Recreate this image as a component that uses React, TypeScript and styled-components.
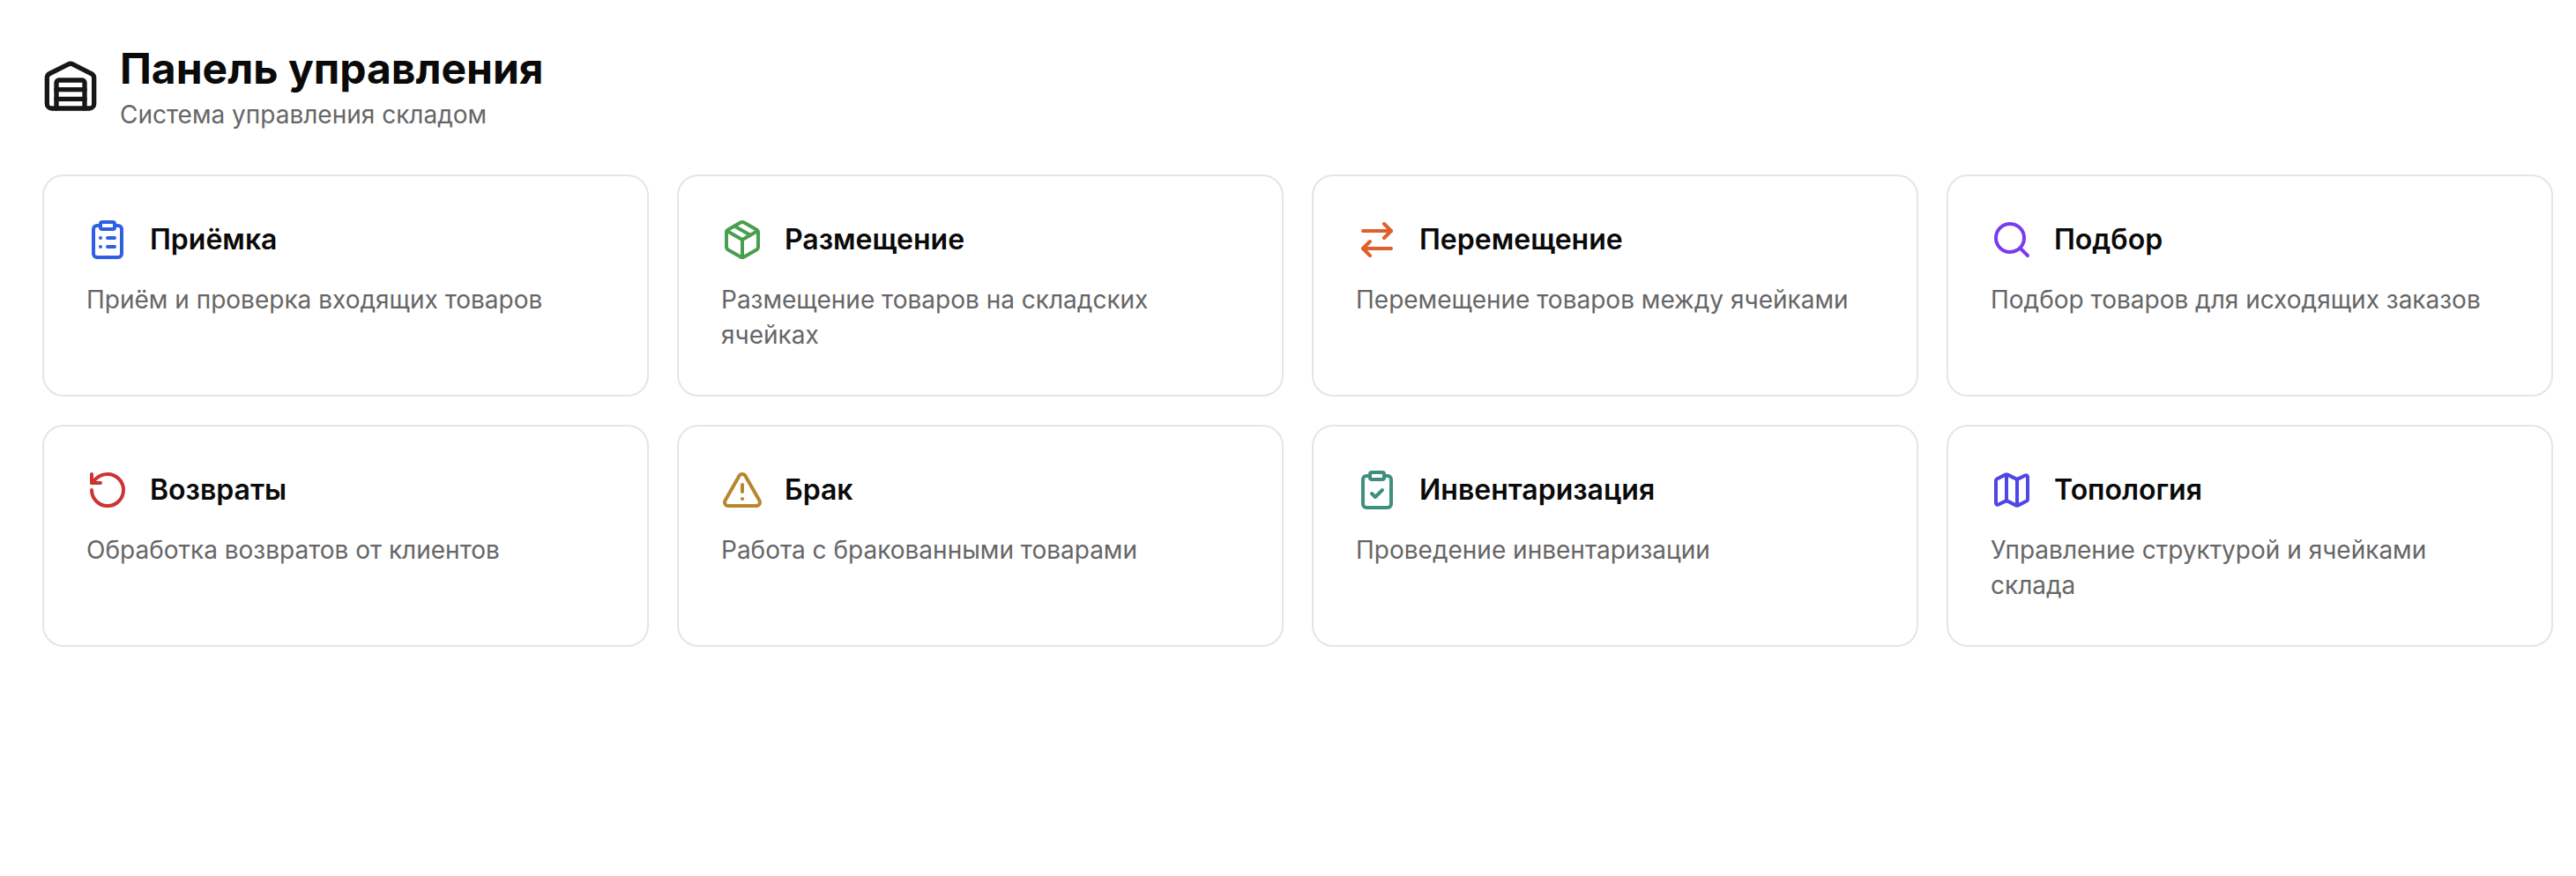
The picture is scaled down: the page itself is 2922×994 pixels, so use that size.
import React, { FC } from "react";
import styled, { createGlobalStyle } from "styled-components";
import {
  ArrowRightLeft,
  ClipboardCheck,
  ClipboardList,
  LucideIcon,
  Map as MapIcon,
  Package,
  RotateCcw,
  Search,
  TriangleAlert,
  Warehouse,
} from "lucide-react";

const GlobalStyle = createGlobalStyle`
  html, body {
    margin: 0;
    padding: 0;
    background: #ffffff;
    font-family: Inter, "Noto Sans", sans-serif;
  }
  * {
    box-sizing: border-box;
  }
`;

const Page = styled.div`
  min-height: 994px;
  padding: 48px 26px 48px 48px;
`;

const Header = styled.header`
  display: flex;
  align-items: center;
  gap: 24px;
  margin-bottom: 48px;
`;

const HeaderIcon = styled(Warehouse)`
  width: 64px;
  height: 64px;
  color: #171717;
  flex-shrink: 0;
`;

const Title = styled.h1`
  margin: 0;
  font-size: 48px;
  line-height: 60px;
  font-weight: 700;
  color: #0a0a0a;
`;

const Subtitle = styled.p`
  margin: 2px 0 0;
  font-size: 28px;
  line-height: 40px;
  color: #666666;
`;

const CardGrid = styled.div`
  display: grid;
  grid-template-columns: repeat(4, 1fr);
  gap: 32px;
`;

const CardBox = styled.div`
  display: flex;
  flex-direction: column;
  gap: 24px;
  padding: 48px;
  border: 2px solid #e5e5e5;
  border-radius: 24px;
  background: #ffffff;
`;

const CardHead = styled.div`
  display: flex;
  align-items: center;
  gap: 24px;
`;

const CardIcon = styled.div<{ $colour: string }>`
  display: flex;
  color: ${({ $colour }) => $colour};
  svg {
    width: 48px;
    height: 48px;
  }
`;

const CardTitle = styled.h2`
  margin: 0;
  font-size: 32px;
  line-height: 48px;
  font-weight: 600;
  color: #0a0a0a;
`;

const CardText = styled.p`
  margin: 0;
  min-height: 80px;
  font-size: 28px;
  line-height: 40px;
  color: #666666;
`;

interface Section {
  title: string;
  text: string;
  icon: LucideIcon;
  colour: string;
}

const SECTIONS: Section[] = [
  { title: "Приёмка", text: "Приём и проверка входящих товаров", icon: ClipboardList, colour: "#2f5fe3" },
  { title: "Размещение", text: "Размещение товаров на складских ячейках", icon: Package, colour: "#4a9e50" },
  { title: "Перемещение", text: "Перемещение товаров между ячейками", icon: ArrowRightLeft, colour: "#e0602a" },
  { title: "Подбор", text: "Подбор товаров для исходящих заказов", icon: Search, colour: "#7c3aed" },
  { title: "Возвраты", text: "Обработка возвратов от клиентов", icon: RotateCcw, colour: "#cc3333" },
  { title: "Брак", text: "Работа с бракованными товарами", icon: TriangleAlert, colour: "#b8862b" },
  { title: "Инвентаризация", text: "Проведение инвентаризации", icon: ClipboardCheck, colour: "#3f8f7f" },
  { title: "Топология", text: "Управление структурой и ячейками склада", icon: MapIcon, colour: "#4f46e5" },
];

const Card: FC<{ section: Section }> = ({ section }) => {
  const Icon = section.icon;
  return (
    <CardBox>
      <CardHead>
        <CardIcon $colour={section.colour}>
          <Icon />
        </CardIcon>
        <CardTitle>{section.title}</CardTitle>
      </CardHead>
      <CardText>{section.text}</CardText>
    </CardBox>
  );
};

const App: FC = () => {
  return (
    <Page>
      <GlobalStyle />
      <Header>
        <HeaderIcon />
        <div>
          <Title>Панель управления</Title>
          <Subtitle>Система управления складом</Subtitle>
        </div>
      </Header>
      <CardGrid>
        {SECTIONS.map((section) => (
          <Card key={section.title} section={section} />
        ))}
      </CardGrid>
    </Page>
  );
};

export default App;
